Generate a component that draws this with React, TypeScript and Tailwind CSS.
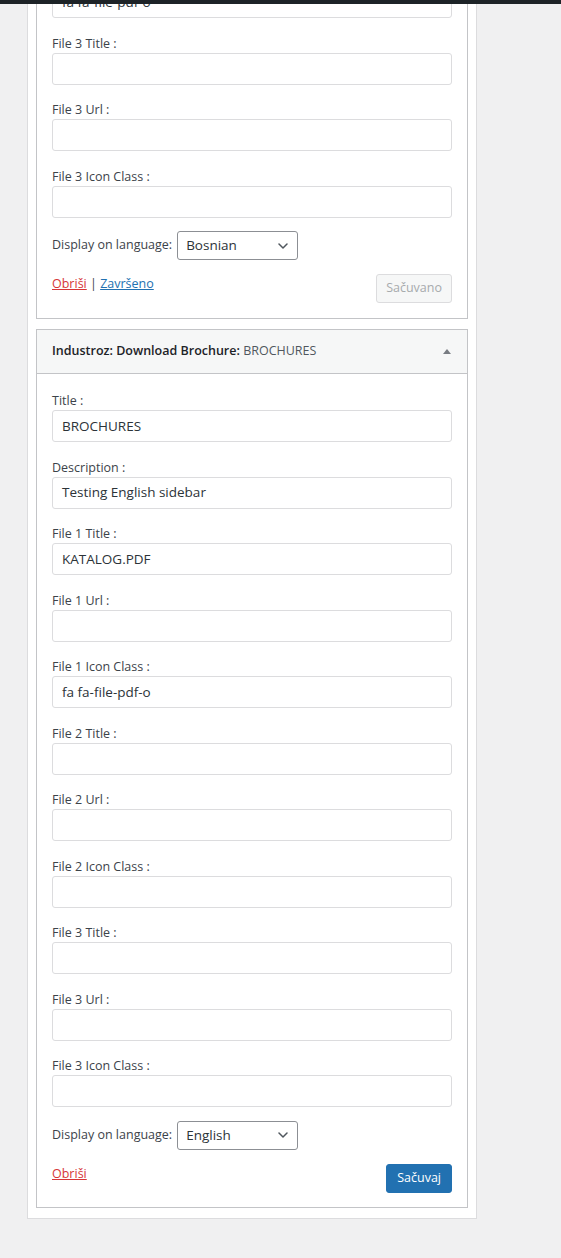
import React from "react";

const font = { fontFamily: '"Open Sans", "Noto Sans", sans-serif' };

function Field({ label, value = "" }: { label: string; value?: string }) {
  return (
    <div className="mb-[15.5px]">
      <div className="h-[19px] leading-[19px] text-[12.5px] text-[#3c434a]">{label}</div>
      <div className="h-[32px] border border-[#dcdcde] rounded-[3px] bg-white px-[9px] flex items-center text-[13.5px] text-[#2c3338]">
        {value}
      </div>
    </div>
  );
}

function LangSelect({ value }: { value: string }) {
  return (
    <div className="flex items-center mb-[14px]">
      <span className="text-[12.5px] text-[#3c434a] mr-[5px]">Display on language:</span>
      <div className="w-[121px] h-[29px] border border-[#8c8f94] rounded-[3px] bg-white flex items-center justify-between pl-[8px] pr-[9px] text-[13.5px] text-[#2c3338]">
        <span>{value}</span>
        <svg width="10" height="6" viewBox="0 0 10 6" fill="none">
          <path d="M1 1l4 4 4-4" stroke="#50575e" strokeWidth="1.5" strokeLinecap="round" strokeLinejoin="round" />
        </svg>
      </div>
    </div>
  );
}

export default function App() {
  return (
    <div className="relative min-h-[1258px] bg-[#f0f0f1] overflow-hidden" style={font}>
      <div className="absolute top-0 left-0 right-0 h-[4px] bg-[#1d2327] z-10" />
      <div className="ml-[27px] w-[450px] -mt-[14px] bg-white border-x border-b border-[#dcdcde] px-[8px] pb-[10px]">
        {/* Widget 1 (partially scrolled) */}
        <div className="border-x border-b border-[#c3c4c7] px-[15px] pb-[15px]">
          <div className="h-[32px] border border-[#dcdcde] rounded-[3px] bg-white px-[9px] flex items-center text-[13.5px] text-[#2c3338] mb-[15.5px]">
            fa fa-file-pdf-o
          </div>
          <Field label="File 3 Title :" />
          <Field label="File 3 Url :" />
          <div className="mb-[-2px]">
            <Field label="File 3 Icon Class :" />
          </div>
          <LangSelect value="Bosnian" />
          <div className="flex items-start justify-between">
            <div className="text-[12.5px] leading-[19px] text-[#3c434a]">
              <a className="text-[#d63638] underline">Obriši</a>
              <span> | </span>
              <a className="text-[#2271b1] underline">Završeno</a>
            </div>
            <button className="h-[29px] px-[9px] border border-[#dcdcde] rounded-[3px] bg-[#f6f7f7] text-[12.5px] text-[#a7aaad]">
              Sačuvano
            </button>
          </div>
        </div>

        {/* Widget 2 */}
        <div className="mt-[10px] border border-[#c3c4c7]">
          <div className="h-[43px] bg-[#f6f7f7] flex items-center justify-between pl-[15px] pr-[16px]">
            <div className="text-[12.5px] text-[#1d2327]">
              <span className="font-semibold">Industroz: Download Brochure:</span>
              <span className="text-[#50575e] font-medium"> BROCHURES</span>
            </div>
            <svg width="8" height="5" viewBox="0 0 8 5">
              <path d="M0 5L4 0l4 5z" fill="#787c82" />
            </svg>
          </div>
          <div className="border-t border-[#c3c4c7] px-[15px] pt-[17px] pb-[14px]">
            <Field label="Title :" value="BROCHURES" />
            <Field label="Description :" value="Testing English sidebar" />
            <Field label="File 1 Title :" value="KATALOG.PDF" />
            <Field label="File 1 Url :" />
            <Field label="File 1 Icon Class :" value="fa fa-file-pdf-o" />
            <Field label="File 2 Title :" />
            <Field label="File 2 Url :" />
            <Field label="File 2 Icon Class :" />
            <Field label="File 3 Title :" />
            <Field label="File 3 Url :" />
            <div className="mb-[-2px]">
              <Field label="File 3 Icon Class :" />
            </div>
            <LangSelect value="English" />
            <div className="flex items-start justify-between">
              <div className="text-[12.5px] leading-[19px]">
                <a className="text-[#d63638] underline">Obriši</a>
              </div>
              <button className="h-[29px] px-[10px] border border-[#2271b1] rounded-[3px] bg-[#2271b1] text-[12.5px] text-white">
                Sačuvaj
              </button>
            </div>
          </div>
        </div>
      </div>
    </div>
  );
}
